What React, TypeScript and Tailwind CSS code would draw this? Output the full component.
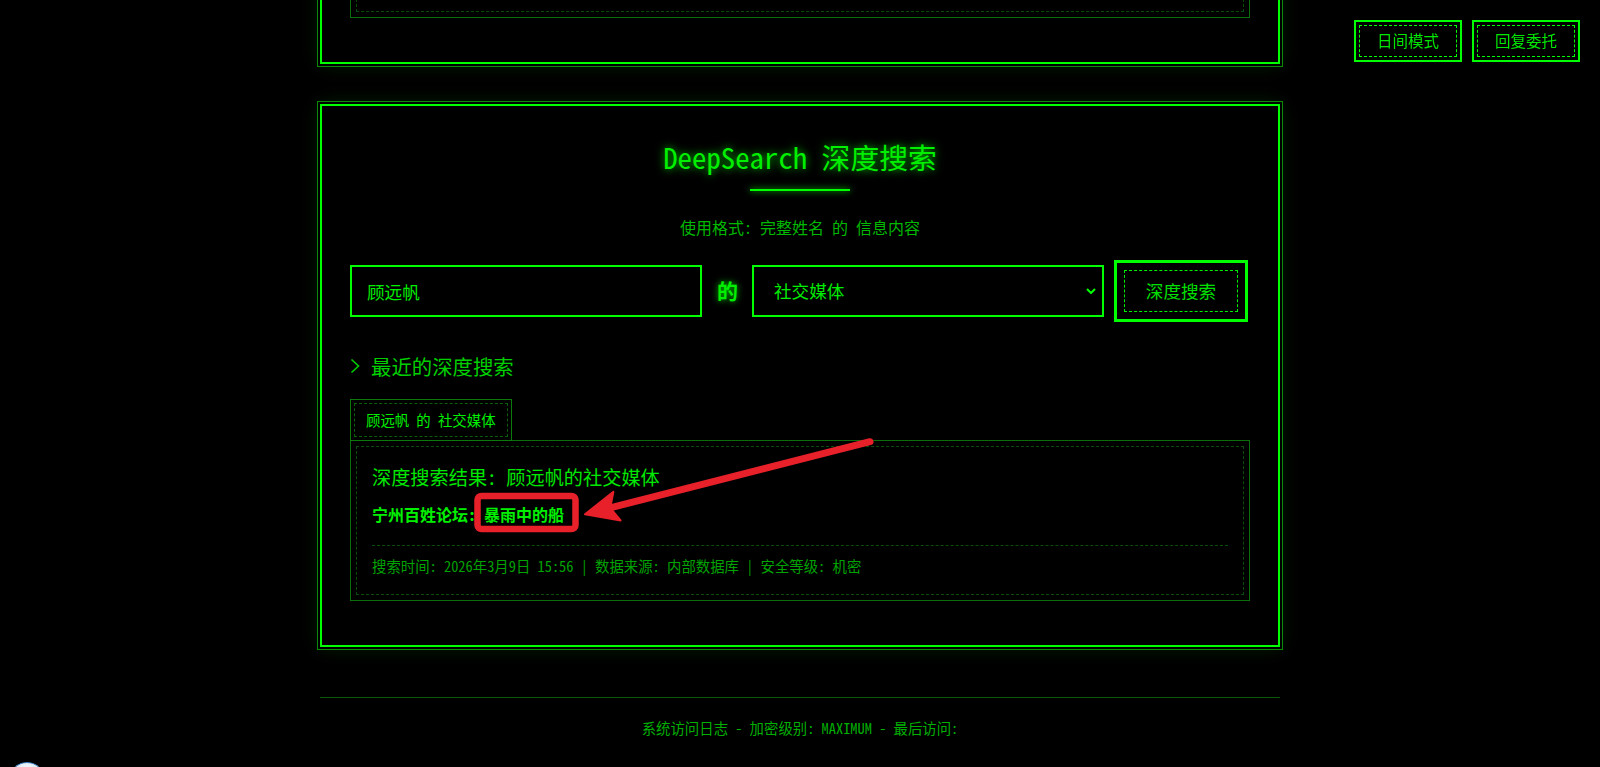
import { useState } from "react";

const records = [
  { site: "宁州百姓论坛", value: "暴雨中的船" },
];

function ResultBox({ children, className = "" }: { children: React.ReactNode; className?: string }) {
  return (
    <div className={"border border-[#0b6e0b] p-[5px] " + className}>
      <div className="h-full border border-dashed border-[#0a4d0a]">{children}</div>
    </div>
  );
}

export default function App() {
  const [name, setName] = useState("顾远帆");
  const [kind, setKind] = useState("社交媒体");

  return (
    <div className="relative min-h-screen overflow-hidden bg-black text-[#00ff00] [font-family:'Noto_Sans_Mono_CJK_SC','Liberation_Mono','Noto_Sans_CJK_SC',monospace]">
      <div className="mx-auto w-[960px]">
        {/* previous panel, scrolled mostly out of view */}
        <section className="-mt-[214px] border-2 border-[#00ff00] px-[28px] pt-[30px] pb-[44px] shadow-[0_0_0_2px_#000,0_0_0_3px_#0c8a0c,0_0_18px_rgba(0,255,0,0.14)]">
          <ResultBox className="h-[200px]">
            <div />
          </ResultBox>
        </section>

        {/* deep search panel */}
        <section className="mt-[40px] border-2 border-[#00ff00] px-[28px] pt-[34px] pb-[44px] shadow-[0_0_0_2px_#000,0_0_0_3px_#0c8a0c,0_0_18px_rgba(0,255,0,0.14)]">
          <h2 className="text-center text-[28.8px] leading-[34px] text-[#00f000] [text-shadow:0_0_9px_rgba(0,255,0,0.8)]">
            DeepSearch 深度搜索
          </h2>
          <div className="mx-auto mt-[15px] h-[2px] w-[100px] bg-[#00ff00] shadow-[0_0_6px_#00ff00]" />
          <p className="mt-[26px] text-center text-[16px] leading-[20px] text-[#00b800]">
            使用格式: 完整姓名 的 信息内容
          </p>

          <div className="mt-[23px] flex h-[62px] items-center">
            <input
              value={name}
              onChange={(e) => setName(e.target.value)}
              className="h-[52px] w-[352px] shrink-0 border-2 border-[#00ff00] bg-black px-[15px] text-[17.6px] text-[#00ee00] outline-none"
            />
            <span className="mx-[15px] w-[20px] shrink-0 text-center text-[21px] font-bold text-[#00ee00] [text-shadow:0_0_6px_rgba(0,255,0,0.8)]">
              的
            </span>
            <div className="relative h-[52px] w-[352px] shrink-0">
              <select
                value={kind}
                onChange={(e) => setKind(e.target.value)}
                className="h-full w-full appearance-none border-2 border-[#00ff00] bg-black px-[20px] text-[17.6px] text-[#00ee00] outline-none"
              >
                <option>社交媒体</option>
                <option>工作经历</option>
                <option>家庭住址</option>
                <option>联系方式</option>
              </select>
              <svg
                viewBox="0 0 10 6"
                className="pointer-events-none absolute right-[8px] top-[23px] h-[6px] w-[10px]"
                fill="none"
                stroke="#00ff00"
                strokeWidth="2"
              >
                <path d="M1 1l4 4 4-4" />
              </svg>
            </div>
            <button className="ml-[10px] h-[62px] w-[134px] shrink-0 border-[3px] border-[#00ff00] p-[7px]">
              <span className="flex h-full w-full items-center justify-center border border-dashed border-[#00ee00] text-[17.6px] text-[#00e000]">
                深度搜索
              </span>
            </button>
          </div>

          <div className="mt-[30px] flex items-center text-[20.4px] leading-[28px] text-[#00d000]">
            <svg viewBox="0 0 10 16" className="h-[16px] w-[10px]" fill="none" stroke="#00d000" strokeWidth="1.6">
              <path d="M1.5 1.5L8.5 8L1.5 14.5" />
            </svg>
            <span className="ml-[11px]">最近的深度搜索</span>
          </div>

          <div className="mt-[19px] inline-flex h-[42px] border border-[#0b7a0b] p-[3px]">
            <div className="flex items-center border border-dashed border-[#0b5e0b] px-[11px] text-[14.4px] text-[#00f000]">
              顾远帆 的 社交媒体
            </div>
          </div>

          <ResultBox className="-mt-px">
            <div className="px-[15px] pt-[16px] pb-[18px]">
              <h3 className="text-[19.2px] leading-[28px] text-[#00e800]">深度搜索结果: 顾远帆的社交媒体</h3>
              {records.map((r) => (
                <div key={r.site} className="mt-[11px] text-[16px] font-bold leading-[24px] text-[#00f000]">
                  {r.site}: {r.value}
                </div>
              ))}
              <div className="mt-[19px] border-t border-dashed border-[#0a4d0a] pt-[10px] text-[14.4px] leading-[20px] text-[#00a300]">
                搜索时间: 2026年3月9日 15:56 | 数据来源: 内部数据库 | 安全等级: 机密
              </div>
            </div>
          </ResultBox>
        </section>

        <footer className="mt-[50px] border-t border-[#0a5a0a] pt-[20px] pb-[40px] text-center text-[14.4px] leading-[20px] text-[#00b000]">
          系统访问日志 - 加密级别: MAXIMUM - 最后访问:
        </footer>
      </div>

      {/* fixed controls */}
      <div className="fixed right-[20px] top-[20px] flex gap-[10px]">
        {["日间模式", "回复委托"].map((t) => (
          <button key={t} className="h-[42px] w-[108px] border-2 border-[#00ff00] bg-black p-[3px]">
            <span className="flex h-full w-full items-center justify-center border border-dashed border-[#00ff00] text-[15.5px] text-[#00e800]">
              {t}
            </span>
          </button>
        ))}
      </div>

      {/* floating helper bubble */}
      <div className="fixed left-[9px] top-[762px] h-[36px] w-[36px] rounded-full border border-[#3d7fc4] bg-[radial-gradient(circle_at_50%_15%,#f2f8fc,#a9c9df)]" />

      {/* annotation */}
      <svg className="pointer-events-none absolute left-0 top-0" width="1600" height="767">
        <rect x="477.5" y="496" width="98" height="33" rx="4" fill="none" stroke="#e8202a" strokeWidth="6.5" />
        <line x1="870" y1="441.7" x2="612" y2="507.4" stroke="#e8202a" strokeWidth="7" strokeLinecap="round" />
        <path d="M585 514.3L613.4 491.9L610.2 507.9L620.6 520.4Z" fill="#e8202a" stroke="#e8202a" strokeWidth="2" strokeLinejoin="round" />
      </svg>
    </div>
  );
}
